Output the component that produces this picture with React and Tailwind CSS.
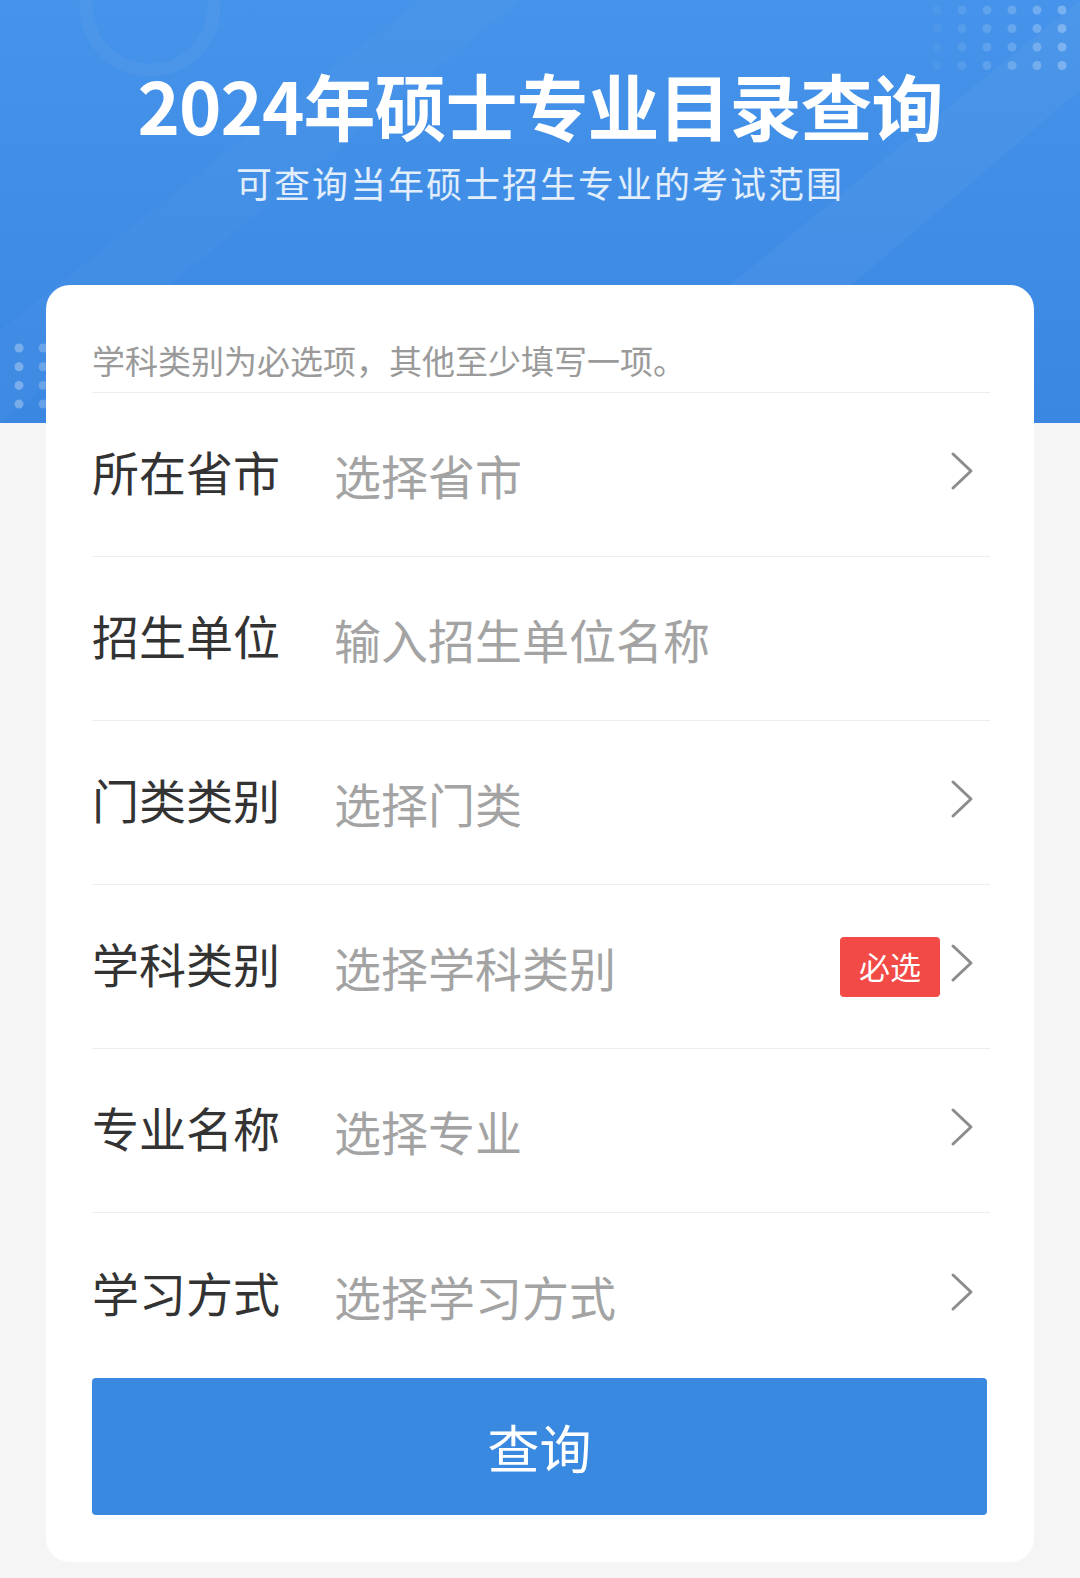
const rows = [
  { label: "所在省市", placeholder: "选择省市", arrow: true },
  { label: "招生单位", placeholder: "输入招生单位名称", arrow: false },
  { label: "门类类别", placeholder: "选择门类", arrow: true },
  { label: "学科类别", placeholder: "选择学科类别", arrow: true, required: true },
  { label: "专业名称", placeholder: "选择专业", arrow: true },
  { label: "学习方式", placeholder: "选择学习方式", arrow: true },
];

function Chevron() {
  return (
    <svg className="mr-[16px] mb-[8px] h-[40px] w-[24px]" viewBox="0 0 24 40" fill="none">
      <polyline points="3,3 21,20 3,37" stroke="#8c8c8c" strokeWidth="3" strokeLinecap="round" strokeLinejoin="round" />
    </svg>
  );
}

function HeaderDecor() {
  const rightDots = [];
  for (let r = 0; r < 4; r++) {
    for (let c = 0; c < 6; c++) {
      rightDots.push(
        <circle key={`r${r}-${c}`} cx={937 + c * 25} cy={10 + r * 18.5} r="4.5" fill="#fff" opacity={0.05 + c * 0.045} />
      );
    }
  }
  const leftDots = [];
  for (let r = 0; r < 4; r++) {
    for (let c = 0; c < 2; c++) {
      leftDots.push(
        <circle key={`l${r}-${c}`} cx={19 + c * 24} cy={348 + r * 18.7} r="4.5" fill="#fff" opacity={c === 0 ? 0.3 : 0.22} />
      );
    }
  }
  return (
    <svg className="absolute inset-0 h-full w-full" viewBox="0 0 1080 423" preserveAspectRatio="none">
      <polygon points="560,423 1080,0 1080,90 690,423" fill="#fff" opacity="0.04" />
      <polygon points="0,330 420,0 520,0 0,423" fill="#fff" opacity="0.025" />
      <circle cx="150" cy="6" r="64" fill="none" stroke="#fff" strokeWidth="13" opacity="0.045" />
      {rightDots}
      {leftDots}
    </svg>
  );
}

export default function App() {
  return (
    <div className="min-h-[1578px] bg-[#f5f5f5]" style={{ fontFamily: '"Noto Sans CJK SC", "Noto Sans", sans-serif' }}>
      <div className="relative h-[423px] overflow-hidden bg-gradient-to-b from-[#4593ea] to-[#3a87e2]">
        <HeaderDecor />
        <div className="relative flex flex-col items-center pt-[64px] text-white">
          <h1 className="text-[72px] font-bold leading-[80px] tracking-[-1px]">2024年硕士专业目录查询</h1>
          <p className="mt-[14px] text-[36px] leading-[48px] tracking-[2px] text-white/85">可查询当年硕士招生专业的考试范围</p>
        </div>
      </div>

      <div className="relative mx-[46px] -mt-[138px] rounded-[24px] bg-white pl-[46px] pr-[44px] pb-[47px]">
        <div className="border-b border-[#eeeeee] pt-[55px] pb-[12px] text-[33px] leading-[40px] text-[#9a9a9a]">
          学科类别为必选项，其他至少填写一项。
        </div>

        {rows.map((row, i) => (
          <div
            key={row.label}
            className={`flex items-center ${i === rows.length - 1 ? "h-[165px]" : "h-[164px] border-b border-[#eeeeee]"}`}
          >
            <div className="w-[242px] shrink-0 pb-[8px] text-[47px] leading-[60px] text-[#333333]">{row.label}</div>
            <div className="flex-1 text-[47px] leading-[60px] text-[#a3a3a3]">{row.placeholder}</div>
            {row.required && (
              <div className="mr-[10px] flex h-[60px] w-[100px] items-center justify-center rounded-[4px] bg-[#f24a46] text-[31px] text-white">
                必选
              </div>
            )}
            {row.arrow && <Chevron />}
          </div>
        ))}

        <button className="flex h-[137px] w-[895px] items-center justify-center rounded-[4px] bg-[#3a89e1] text-[52px] text-white">
          查询
        </button>
      </div>
    </div>
  );
}
